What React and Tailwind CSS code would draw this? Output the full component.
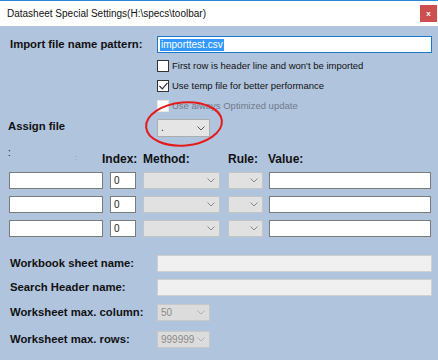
import React from 'react';

function Chevron({ color = '#707070' }) {
    return (
        <svg width="8" height="5" viewBox="0 0 8 5" className="shrink-0">
            <path d="M0.5 0.5 L4 4 L7.5 0.5" fill="none" stroke={color} strokeWidth="1" />
        </svg>
    );
}

function Combo({ w, text, textColor = 'text-[#1a1a1a]', bg = 'bg-[#e1e1e1]', border = 'border-[#c4c4c4]', chevron }) {
    return (
        <div className={`${w} h-full ${bg} border ${border} flex items-center pl-[3px] pr-[4px] text-[10px] ${textColor}`}>
            <span className="flex-1 leading-none">{text}</span>
            <Chevron color={chevron} />
        </div>
    );
}

function Check({ checked, disabled, children }) {
    return (
        <div className="flex items-center h-[12px]">
            <div
                className={`w-[12px] h-[12px] bg-white border ${disabled ? 'border-[#e6e6e6]' : 'border-[#333333]'} flex items-center justify-center`}
            >
                {checked && (
                    <svg width="9" height="8" viewBox="0 0 9 8">
                        <path d="M0.5 4 L3.3 6.8 L8.5 0.8" fill="none" stroke="#333" strokeWidth="1.2" />
                    </svg>
                )}
            </div>
            <span className={`ml-[3px] text-[9.5px] leading-none ${disabled ? 'text-[#707a88]' : 'text-[#111]'}`}>{children}</span>
        </div>
    );
}

function FieldRow({ label, className = '', children }) {
    return (
        <div className={`flex items-center h-[17px] ${className}`}>
            <div className="w-[157px] pl-[10px] text-[11.3px] font-bold text-[#111] leading-none">{label}</div>
            {children}
        </div>
    );
}

export default function App() {
    const rows = [0, 1, 2];

    return (
        <div
            className="relative w-[438px] h-[360px] overflow-hidden bg-[#b0c4de] flex flex-col"
            style={{ fontFamily: '"Liberation Sans", Arial, sans-serif' }}
        >
            {/* title bar */}
            <div className="h-[26px] bg-white border-t border-[#2b88d8] flex items-center pl-[7px] pr-[1px] shrink-0">
                <span className="text-[10px] text-[#111] leading-none">Datasheet Special Settings(H:\specs\toolbar)</span>
                <div className="ml-auto w-[17px] h-[17px] bg-[#cd4f4f] flex items-center justify-center">
                    <span className="text-white text-[8px] font-bold leading-none">x</span>
                </div>
            </div>

            {/* import pattern */}
            <FieldRow label="Import file name pattern:" className="mt-[10px] h-[16px]">
                <div className="w-[275px] h-full bg-white border border-[#1979ca] flex items-center pl-[2px]">
                    <span className="bg-[#3399ff] text-white text-[10px] leading-[12px] px-[1px]">importtest.csv</span>
                </div>
            </FieldRow>

            <div className="mt-[7px] ml-[157px] flex flex-col gap-[8px]">
                <Check>First row is header line and won't be imported</Check>
                <Check checked>Use temp file for better performance</Check>
                <Check disabled>Use always Optimized update</Check>
            </div>

            <div className="flex items-center h-[18px] mt-[7px]">
                <div className="w-[157px] pl-[8px] text-[11.3px] font-bold text-[#111] leading-none -mt-[3px]">Assign file</div>
                <Combo w="w-[53px]" text="." bg="bg-[#e5e5e5]" border="border-[#adadad]" chevron="#555" />
            </div>

            {/* column headers */}
            <div className="flex h-[16px] mt-[12px] text-[12px] font-bold text-[#111] leading-none">
                <div className="w-[102px] flex items-start">
                    <span className="pl-[8px] text-[10px] font-normal -mt-[1px]">:</span>
                    <span className="ml-[64px] mt-[5px] text-[8px] font-normal text-[#7f9dc4]">:</span>
                </div>
                <span className="w-[41px] self-end">Index:</span>
                <span className="w-[85px] self-end">Method:</span>
                <span className="w-[40px] self-end">Rule:</span>
                <span className="self-end">Value:</span>
            </div>

            {/* mapping rows */}
            <div className="mt-[7px] flex flex-col gap-[7px] pl-[9px]">
                {rows.map((r) => (
                    <div key={r} className="flex h-[17px] items-stretch">
                        <div className="w-[94px] bg-white border border-[#7a7a7a]" />
                        <div className="ml-[7px] w-[26px] bg-white border border-[#7a7a7a] flex items-center pl-[3px] text-[10px] text-[#222] leading-none">0</div>
                        <div className="ml-[7px]">
                            <Combo w="w-[77px]" text="" chevron="#8a8a8a" />
                        </div>
                        <div className="ml-[8px]">
                            <Combo w="w-[35px]" text="" chevron="#8a8a8a" />
                        </div>
                        <div className="ml-[6px] w-[162px] bg-white border border-[#7a7a7a]" />
                    </div>
                ))}
            </div>

            <FieldRow label="Workbook sheet name:" className="mt-[18px]">
                <div className="w-[275px] h-full bg-[#f0f0f0] border border-[#d0d0d0]" />
            </FieldRow>
            <FieldRow label="Search Header name:" className="mt-[7px]">
                <div className="w-[275px] h-full bg-[#f0f0f0] border border-[#d0d0d0]" />
            </FieldRow>
            <FieldRow label="Worksheet max. column:" className="mt-[8px]">
                <Combo w="w-[53px]" text="50" textColor="text-[#8a8a8a]" bg="bg-[#dcdcdc]" border="border-[#c8c8c8]" chevron="#b0b0b0" />
            </FieldRow>
            <FieldRow label="Worksheet max. rows:" className="mt-[10px]">
                <Combo w="w-[53px]" text="999999" textColor="text-[#8a8a8a]" bg="bg-[#dcdcdc]" border="border-[#c8c8c8]" chevron="#b0b0b0" />
            </FieldRow>

            {/* red annotation ellipse */}
            <svg className="absolute left-[143px] top-[99px]" width="82" height="50" viewBox="0 0 82 50">
                <ellipse cx="41" cy="25" rx="38" ry="21.5" fill="none" stroke="#e31b1b" strokeWidth="2" transform="rotate(-5 41 25)" />
            </svg>
        </div>
    );
}
